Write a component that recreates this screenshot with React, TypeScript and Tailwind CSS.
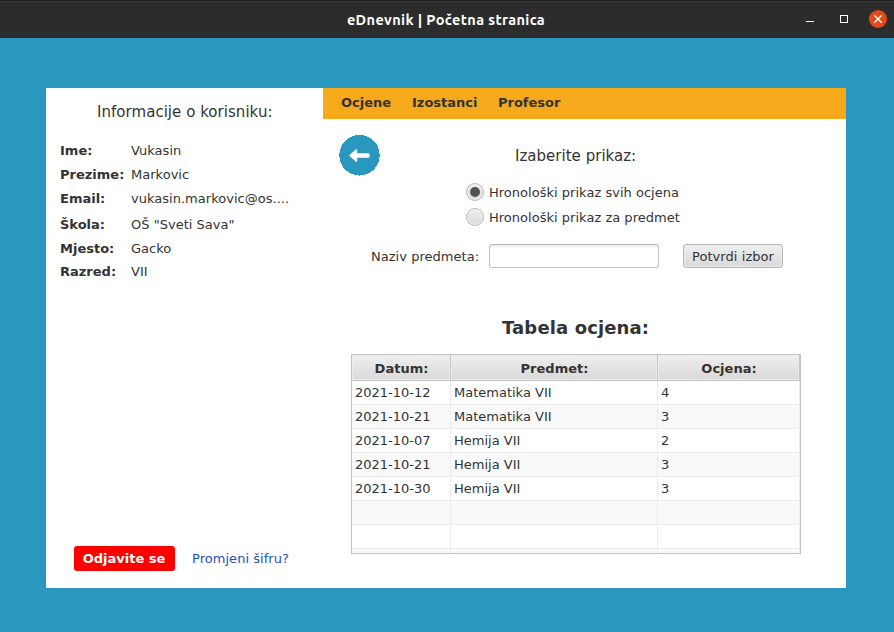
const info = [
  { label: 'Ime:', value: 'Vukasin', height: 'h-6' },
  { label: 'Prezime:', value: 'Markovic', height: 'h-6' },
  { label: 'Email:', value: 'vukasin.markovic@os....', height: 'h-[26px]' },
  { label: 'Škola:', value: 'OŠ "Sveti Sava"', height: 'h-6' },
  { label: 'Mjesto:', value: 'Gacko', height: 'h-[23px]' },
  { label: 'Razred:', value: 'VII', height: 'h-6' },
];

const grades = [
  ['2021-10-12', 'Matematika VII', '4'],
  ['2021-10-21', 'Matematika VII', '3'],
  ['2021-10-07', 'Hemija VII', '2'],
  ['2021-10-21', 'Hemija VII', '3'],
  ['2021-10-30', 'Hemija VII', '3'],
  ['', '', ''],
  ['', '', ''],
  ['', '', ''],
];

function TitleBar() {
  return (
    <header className="flex h-[38px] shrink-0 items-center border-t-[1px] border-b border-t-[#1d1d1d] border-b-[#252525] bg-[#2c2c2c] shadow-[inset_0_1px_0_#3a3a3a]">
      <div className="w-[110px]" />
      <h1 className="flex-1 pt-px pr-[2px] text-center font-['Ubuntu','Noto_Sans',sans-serif] text-[14.5px] leading-5 font-bold tracking-[0.36px] whitespace-nowrap text-white">
        eDnevnik | Početna stranica
      </h1>
      <div className="flex w-[110px] items-center justify-end pr-[7px]">
        <svg width="8" height="8" className="mr-[26px]" shapeRendering="crispEdges">
          <rect y="6" width="8" height="1" fill="#fff" />
        </svg>
        <svg width="8" height="8" className="mr-[21px]" shapeRendering="crispEdges">
          <rect x=".5" y=".5" width="7" height="7" fill="none" stroke="#fff" />
        </svg>
        <svg width="18" height="18" viewBox="0 0 18 18">
          <circle cx="9" cy="9" r="9" fill="#e24a19" />
          <path d="M5.3 5.3l7.4 7.4M12.7 5.3l-7.4 7.4" stroke="#fff" strokeWidth="1.4" />
        </svg>
      </div>
    </header>
  );
}

function Sidebar() {
  return (
    <aside className="flex w-[277px] shrink-0 flex-col">
      <h2 className="mt-3 pl-[51px] text-[15px] leading-6 tracking-[0.04px]">Informacije o korisniku:</h2>
      <dl className="mt-[15px] pl-[14px]">
        {info.map((item) => (
          <div key={item.label} className={'flex leading-6 ' + item.height}>
            <dt className="w-[71px] font-bold">{item.label}</dt>
            <dd className="tracking-[0.02px]">{item.value}</dd>
          </div>
        ))}
      </dl>
      <div className="mt-auto mb-[17px] flex items-center pl-7">
        <button className="h-[25px] w-[101px] rounded-[3px] bg-[#ff0000] pr-px font-bold text-white">Odjavite se</button>
        <a className="ml-[17px] tracking-[0.04px] text-[#1f4fb8]">Promjeni šifru?</a>
      </div>
    </aside>
  );
}

function Radio({ label, checked }: { label: string; checked?: boolean }) {
  return (
    <label className="flex h-[25px] items-center">
      <span className="mr-[5px] flex size-[18px] items-center justify-center rounded-full border border-[#b7b7b7] bg-linear-to-b from-[#efefef] to-[#dadada] shadow-[inset_0_0_0_1px_#f4f4f4]">
        {checked && <span className="size-[10px] rounded-full bg-[#535353]" />}
      </span>
      <span className="pt-[2px] tracking-[0.02px]">{label}</span>
    </label>
  );
}

const cell = 'border-r border-[#ededed] pl-[3px]';
const head =
  'flex items-center justify-center border-r border-b border-[#c4c4c4] bg-linear-to-b from-[#efefef] to-[#d9d9d9] pt-[2px] pl-px font-bold shadow-[inset_0_0_0_1px_#ececec]';

function GradesTable() {
  return (
    <div className="ml-7 h-[200px] w-[450px] overflow-hidden border border-[#c4c4c4]">
      <div className="grid h-[26px] grid-cols-[99px_207px_142px]">
        <div className={head}>Datum:</div>
        <div className={head}>Predmet:</div>
        <div className={head}>Ocjena:</div>
      </div>
      {grades.map((row, i) => (
        <div
          key={i}
          className={
            'grid h-6 grid-cols-[99px_207px_142px] border-b border-[#ededed] leading-[23px] ' +
            (i % 2 ? 'bg-[#f9f9f9]' : 'bg-white')
          }
        >
          {row.map((value, j) => (
            <div key={j} className={cell}>{value}</div>
          ))}
        </div>
      ))}
    </div>
  );
}

export default function App() {
  return (
    <div className="flex h-[632px] w-[894px] flex-col overflow-hidden bg-[#2a97be] font-['DejaVu_Sans',sans-serif] text-[13px] text-[#333333]">
      <TitleBar />
      <main className="mx-[46px] mt-[50px] flex h-[500px] w-[800px] bg-white">
        <Sidebar />
        <section className="flex flex-1 flex-col">
          <nav className="flex h-[31px] shrink-0 bg-[#f6a91b] pl-[18px] leading-[29px] font-bold">
            <a className="w-[71px]">Ocjene</a>
            <a className="w-[86px]">Izostanci</a>
            <a>Profesor</a>
          </nav>
          <div className="flex pt-4 pl-4">
            <button className="h-[41px] w-[41px] shrink-0">
              <svg width="41" height="41" viewBox="0 0 41 41">
                <circle cx="20.5" cy="20.3" r="20.2" fill="#2a97be" shapeRendering="crispEdges" />
                <path
                  d="M11 20.5L17.5 14.8V18.9H29.4Q30 18.9 30 20.5T29.4 22.1H17.5V26.2Z"
                  fill="#fff"
                  stroke="#fff"
                  strokeWidth="1.4"
                  strokeLinejoin="round"
                />
              </svg>
            </button>
            <div className="pl-[86px]">
              <h2 className="mt-[9px] pl-[49px] text-[15px] leading-6 tracking-[0.02px]">Izaberite prikaz:</h2>
              <div className="mt-[11px] mb-px">
                <Radio label="Hronološki prikaz svih ocjena" checked />
                <Radio label="Hronološki prikaz za predmet" />
              </div>
            </div>
          </div>
          <div className="mt-[14px] flex h-6 items-center pl-12">
            <label className="w-[118px] pt-[2px] tracking-[0.03px]">Naziv predmeta:</label>
            <input className="h-6 w-[170px] rounded-[3px] border border-[#c3c3c3] border-t-[#b5b5b5] bg-white shadow-[inset_0_2px_2px_#eeeeee]" />
            <button className="ml-6 h-6 w-[100px] rounded-[3px] border border-[#b5b5b5] bg-linear-to-b from-[#efefef] to-[#d9d9d9] pt-px leading-[22px] tracking-[0.06px] shadow-[inset_0_0_0_1px_#ececec]">
              Potvrdi izbor
            </button>
          </div>
          <h2 className="mt-[47px] mb-[14px] pl-[179px] text-[18px] leading-[25px] font-bold tracking-[0.13px]">
            Tabela ocjena:
          </h2>
          <GradesTable />
        </section>
      </main>
    </div>
  );
}
